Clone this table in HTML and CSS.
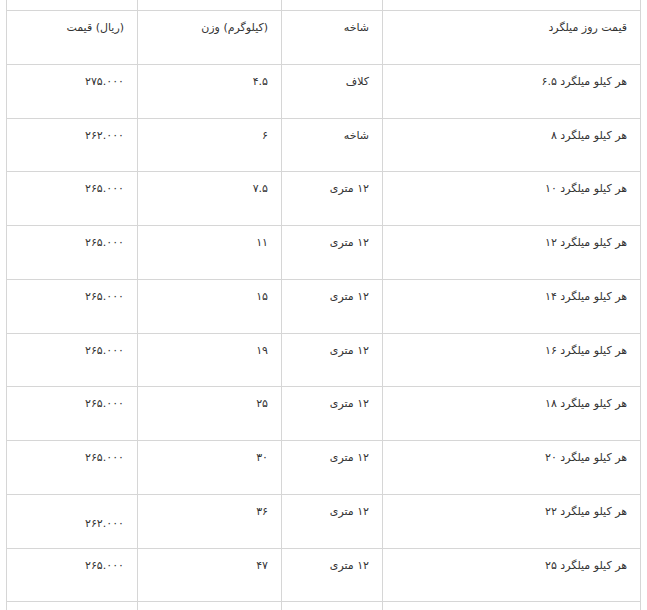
FILE: index.html
```html
<!DOCTYPE html>
<html lang="fa" dir="rtl">
<head>
<meta charset="utf-8">
<title>قیمت روز میلگرد</title>
<link rel="stylesheet" href="styles.css">
</head>
<body>
<table class="price-table">
  <colgroup>
    <col class="c-name">
    <col class="c-branch">
    <col class="c-weight">
    <col class="c-price">
  </colgroup>
  <tbody>
    <tr class="row-cut-top"><td></td><td></td><td></td><td></td></tr>
    <tr><td>قیمت روز میلگرد</td><td>شاخه</td><td>(کیلوگرم) وزن</td><td>(ریال) قیمت</td></tr>
    <tr><td>هر کیلو میلگرد ۶.۵</td><td>کلاف</td><td>۴.۵</td><td>۲۷۵.۰۰۰</td></tr>
    <tr><td>هر کیلو میلگرد ۸</td><td>شاخه</td><td>۶</td><td>۲۶۲.۰۰۰</td></tr>
    <tr><td>هر کیلو میلگرد ۱۰</td><td>۱۲ متری</td><td>۷.۵</td><td>۲۶۵.۰۰۰</td></tr>
    <tr><td>هر کیلو میلگرد ۱۲</td><td>۱۲ متری</td><td>۱۱</td><td>۲۶۵.۰۰۰</td></tr>
    <tr><td>هر کیلو میلگرد ۱۴</td><td>۱۲ متری</td><td>۱۵</td><td>۲۶۵.۰۰۰</td></tr>
    <tr><td>هر کیلو میلگرد ۱۶</td><td>۱۲ متری</td><td>۱۹</td><td>۲۶۵.۰۰۰</td></tr>
    <tr><td>هر کیلو میلگرد ۱۸</td><td>۱۲ متری</td><td>۲۵</td><td>۲۶۵.۰۰۰</td></tr>
    <tr><td>هر کیلو میلگرد ۲۰</td><td>۱۲ متری</td><td>۳۰</td><td>۲۶۵.۰۰۰</td></tr>
    <tr><td>هر کیلو میلگرد ۲۲</td><td>۱۲ متری</td><td>۳۶</td><td class="cell-low">۲۶۲.۰۰۰</td></tr>
    <tr><td>هر کیلو میلگرد ۲۵</td><td>۱۲ متری</td><td>۴۷</td><td>۲۶۵.۰۰۰</td></tr>
    <tr><td></td><td></td><td></td><td></td></tr>
  </tbody>
</table>
</body>
</html>
```
FILE: styles.css
```css
html, body {
  margin: 0;
  padding: 0;
  overflow: hidden;
  background: #fff;
}

body {
  font-family: "DejaVu Sans", sans-serif;
  font-size: 11px;
  color: #333;
}

.price-table {
  border-collapse: collapse;
  table-layout: fixed;
  width: 634px;
  margin-left: 7px;
  margin-right: 6px;
}

.c-name { width: 258px; }
.c-branch { width: 101px; }
.c-weight { width: 144px; }
.c-price { width: 131px; }

.price-table td {
  border: 1px solid #d6d6d6;
  vertical-align: top;
  text-align: right;
  padding: 8px 13px 0 13px;
  line-height: 18px;
  height: 44.75px;
}

.price-table .row-cut-top td {
  border-top: none;
  height: 10px;
  padding: 0;
}

.price-table td.cell-low {
  padding-top: 20px;
  height: 32.75px;
}
```
